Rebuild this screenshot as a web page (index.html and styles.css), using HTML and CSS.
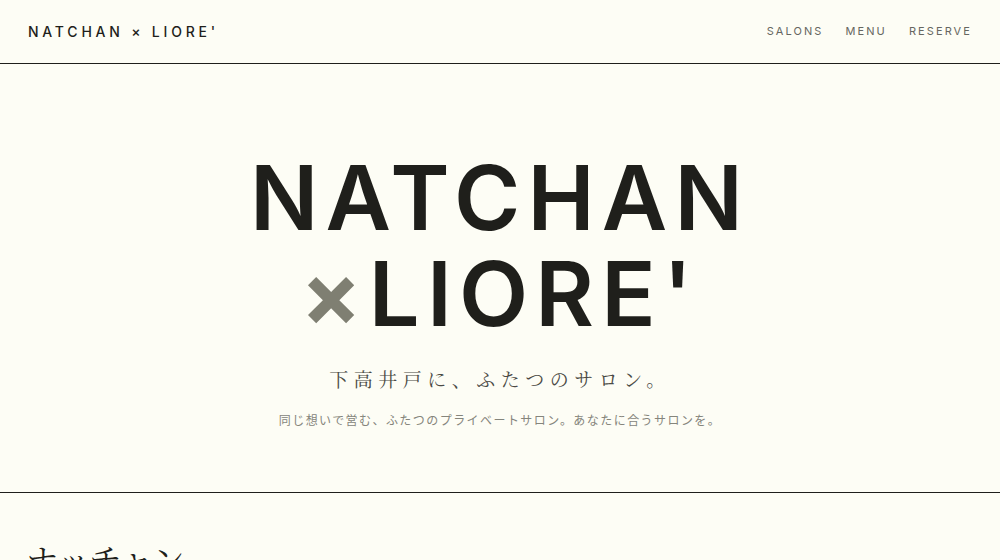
FILE: index.html
```html
<!DOCTYPE html>
<html lang="ja">
<head>
<meta charset="utf-8">
<title>NATCHAN × LIORE'</title>
<link rel="stylesheet" href="styles.css">
</head>
<body>
<header class="site-header">
  <div class="logo">NATCHAN × LIORE'</div>
  <nav class="nav">
    <a href="#">SALONS</a>
    <a href="#">MENU</a>
    <a href="#">RESERVE</a>
  </nav>
</header>
<section class="hero">
  <h1 class="hero-title">
    <span class="line">NATCHAN</span>
    <span class="line"><span class="cross">×</span>LIORE'</span>
  </h1>
  <p class="hero-sub">下高井戸に、ふたつのサロン。</p>
  <p class="hero-desc">同じ想いで営む、ふたつのプライベートサロン。あなたに合うサロンを。</p>
</section>
<section class="salon">
  <h2 class="salon-title">ナッチャン</h2>
</section>
</body>
</html>
```
FILE: styles.css
```css
* { box-sizing: border-box; }
html, body { margin: 0; padding: 0; }
body {
  background: #fdfdf5;
  color: #1f1f1b;
  font-family: Inter, "Noto Sans CJK JP", sans-serif;
}
.site-header {
  height: 64px;
  border-bottom: 1px solid #1f1f1b;
  display: flex;
  align-items: center;
  justify-content: space-between;
  padding: 0 28px 1px 28px;
}
.logo {
  font-size: 14px;
  font-weight: 500;
  letter-spacing: 0.27em;
  color: #1f1f1b;
}
.nav { display: flex; gap: 22px; }
.nav a {
  font-size: 11px;
  letter-spacing: 0.19em;
  color: #666660;
  text-decoration: none;
}
.hero {
  height: 429px;
  border-bottom: 1px solid #1f1f1b;
  display: flex;
  flex-direction: column;
  align-items: center;
  padding-top: 86px;
}
.hero-title {
  margin: 0;
  font-size: 90px;
  font-weight: 600;
  line-height: 96px;
  letter-spacing: 0.08em;
  text-align: center;
  color: #1f1f1b;
}
.hero-title .line { display: block; }
.cross { color: #7f7f72; font-weight: 700; }
.hero-sub {
  margin: 23px 0 0 0;
  font-family: "Noto Serif CJK JP", "Liberation Serif", serif;
  font-size: 19px;
  letter-spacing: 0.29em;
  color: #4a4a44;
}
.hero-desc {
  margin: 19px 0 0 0;
  font-size: 12px;
  letter-spacing: 0.12em;
  color: #85857c;
}
.salon { padding: 42px 26px 0; }
.salon-title {
  margin: 0;
  font-family: "Noto Serif CJK JP", "Liberation Serif", serif;
  font-weight: 400;
  font-size: 32px;
  color: #1f1f1b;
}
```
